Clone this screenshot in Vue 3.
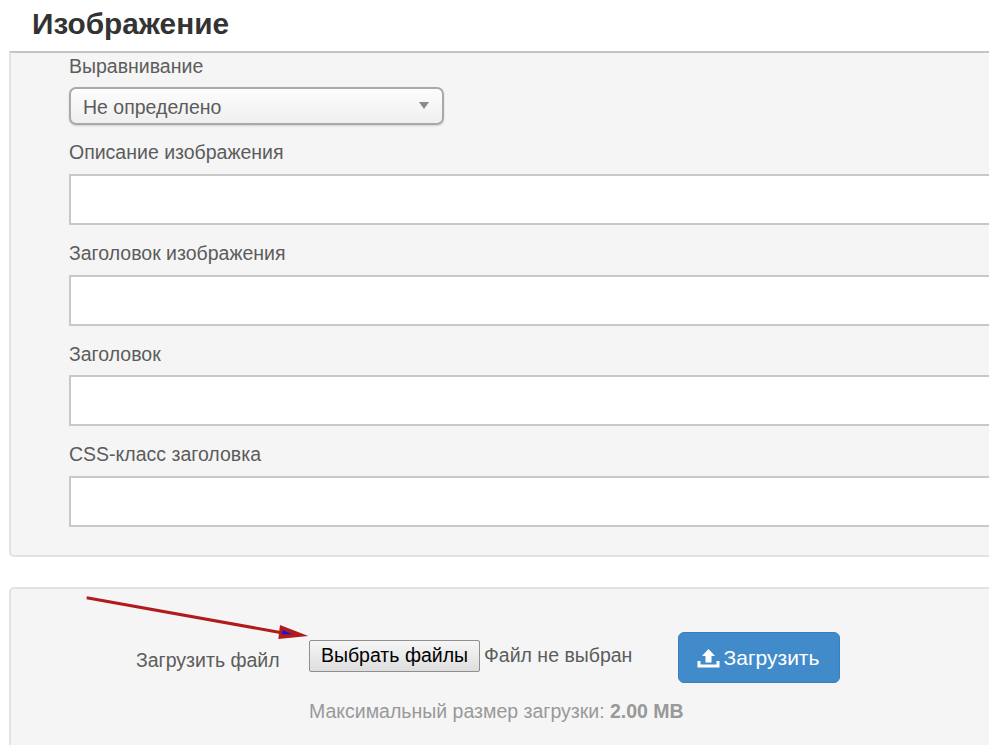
<script setup>
const fields = [
  { label: 'Описание изображения' },
  { label: 'Заголовок изображения' },
  { label: 'Заголовок' },
  { label: 'CSS-класс заголовка' },
]
</script>

<template>
  <div class="page">
    <h1 class="title">Изображение</h1>
    <section class="panel fields-panel">
      <div class="field align-field">
        <label class="label">Выравнивание</label>
        <div class="select">
          <span>Не определено</span>
          <i class="caret"></i>
        </div>
      </div>
      <div v-for="f in fields" :key="f.label" class="field">
        <label class="label">{{ f.label }}</label>
        <div class="input"></div>
      </div>
    </section>
    <section class="panel upload-panel">
      <svg class="arrow" width="310" height="60" viewBox="0 0 310 60">
        <line x1="75.7" y1="8.7" x2="272" y2="44" stroke="#b01c1c" stroke-width="3" />
        <polygon points="269,36 297.3,47 267.3,50" fill="#b01c1c" />
        <polygon points="271.7,41 281,45.3 271,45.3" fill="#1414d8" />
      </svg>
      <div class="upload-row">
        <span class="upload-label">Загрузить файл</span>
        <div class="chooser">
          <button class="file-btn" type="button">Выбрать файлы</button>
          <span class="file-state">Файл не выбран</span>
        </div>
        <button class="submit" type="button">
          <svg width="23" height="20" viewBox="0 0 23 20">
            <path d="M11.5 1 L18 8 H14.5 V14.5 H8.5 V8 H5 Z M0.5 13 H3.5 V16.5 H19.5 V13 H22.5 V19.5 H0.5 Z" fill="#fff" />
          </svg>
          <span>Загрузить</span>
        </button>
      </div>
      <p class="limit">Максимальный размер загрузки: <b>2.00 MB</b></p>
    </section>
  </div>
</template>

<style scoped>
.page {
  width: 989px;
  height: 745px;
  overflow: hidden;
  background: #fff;
  font-family: "Liberation Sans", Arial, sans-serif;
  color: #5c5c5c;
}
.title {
  margin: 0;
  height: 51px;
  padding: 7px 0 0 32px;
  box-sizing: border-box;
  font-size: 29.8px;
  line-height: 34px;
  font-weight: 700;
  color: #333;
}
.panel {
  width: 1010px;
  margin-left: 9px;
  box-sizing: border-box;
  background: #f5f5f5;
  border: 2px solid #e3e3e3;
  border-radius: 5px;
}
.fields-panel {
  height: 506px;
  padding: 0 0 0 58px;
  border-top-color: #c4c4c4;
  border-radius: 0 0 5px 5px;
}
.label {
  display: block;
  height: 49.67px;
  padding-top: 15px;
  box-sizing: border-box;
  font-size: 19.5px;
  line-height: 26px;
  color: #5c5c5c;
}
.align-field .label {
  height: 34px;
  padding-top: 0;
}
.select {
  width: 375px;
  height: 38px;
  margin-bottom: -0.67px;
  box-sizing: border-box;
  display: flex;
  align-items: center;
  justify-content: space-between;
  padding: 2px 13px 0 12px;
  border: 2px solid #a9a9a9;
  border-radius: 7px;
  background: linear-gradient(#fdfdfd, #efefef);
  box-shadow: 0 1px 2px rgba(0, 0, 0, 0.15);
  font-size: 19.5px;
  color: #5c5c5c;
}
.caret {
  width: 0;
  height: 0;
  margin-top: -3px;
  border-left: 5px solid transparent;
  border-right: 5px solid transparent;
  border-top: 7px solid #8a8a8a;
}
.input {
  height: 51px;
  box-sizing: border-box;
  background: #fff;
  border: 2px solid #c8c8c8;
}
.upload-panel {
  position: relative;
  height: 200px;
  margin-top: 30px;
  padding: 43px 0 0 125px;
}
.arrow {
  position: absolute;
  left: 0;
  top: 0;
  width: 310px;
  height: 60px;
  overflow: visible;
}
.upload-row {
  display: flex;
  align-items: flex-start;
}
.upload-label {
  width: 173px;
  flex: none;
  padding-top: 15px;
  font-size: 19.5px;
  line-height: 26px;
  color: #5c5c5c;
}
.chooser {
  width: 369px;
  flex: none;
  display: flex;
  align-items: flex-start;
  padding-top: 8px;
}
.file-btn {
  width: 171px;
  height: 32px;
  padding: 0 0 2px;
  box-sizing: border-box;
  border: 1px solid #8f8f8f;
  border-radius: 2px;
  background: linear-gradient(#f6f6f6, #dedede);
  font-family: inherit;
  font-size: 19.5px;
  color: #000;
}
.file-state {
  margin-left: 4px;
  font-size: 19.5px;
  line-height: 30px;
  color: #5c5c5c;
}
.submit {
  width: 162px;
  height: 51px;
  flex: none;
  display: flex;
  align-items: center;
  justify-content: center;
  gap: 4px;
  padding: 0 2px 0 0;
  border: 1px solid #3a7fbd;
  border-radius: 6px;
  background: #428bca;
  font-family: inherit;
  font-size: 21px;
  color: #fff;
}
.limit {
  margin: 15px 0 0 173px;
  font-size: 19.5px;
  line-height: 26px;
  color: #999;
}
</style>
